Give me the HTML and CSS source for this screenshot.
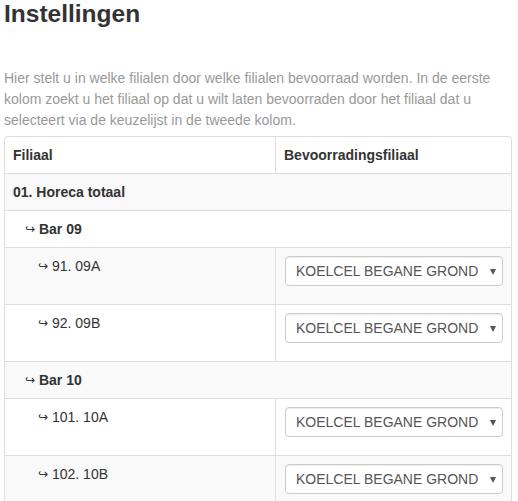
FILE: index.html
```html
<!DOCTYPE html>
<html lang="nl">
<head>
<meta charset="utf-8">
<title>Instellingen</title>
<link rel="stylesheet" href="styles.css">
</head>
<body>
<div class="page">
  <h1 class="title">Instellingen</h1>
  <p class="intro">Hier stelt u in welke filialen door welke filialen bevoorraad worden. In de eerste kolom zoekt u het filiaal op dat u wilt laten bevoorraden door het filiaal dat u selecteert via de keuzelijst in de tweede kolom.</p>
  <div class="panel">
    <table class="grid">
      <thead>
        <tr><th class="col-a">Filiaal</th><th>Bevoorradingsfiliaal</th></tr>
      </thead>
      <tbody>
        <tr class="odd"><td colspan="2" class="group">01. Horeca totaal</td></tr>
        <tr><td colspan="2" class="group lvl1"><span class="arr">↪</span> Bar 09</td></tr>
        <tr class="odd">
          <td class="lvl2"><span class="arr">↪</span> 91. 09A</td>
          <td><div class="pick"><select class="sel"><option>KOELCEL BEGANE GROND</option></select></div></td>
        </tr>
        <tr>
          <td class="lvl2"><span class="arr">↪</span> 92. 09B</td>
          <td><div class="pick"><select class="sel"><option>KOELCEL BEGANE GROND</option></select></div></td>
        </tr>
        <tr class="odd"><td colspan="2" class="group lvl1"><span class="arr">↪</span> Bar 10</td></tr>
        <tr>
          <td class="lvl2"><span class="arr">↪</span> 101. 10A</td>
          <td><div class="pick"><select class="sel"><option>KOELCEL BEGANE GROND</option></select></div></td>
        </tr>
        <tr class="odd">
          <td class="lvl2"><span class="arr">↪</span> 102. 10B</td>
          <td><div class="pick"><select class="sel"><option>KOELCEL BEGANE GROND</option></select></div></td>
        </tr>
      </tbody>
    </table>
  </div>
</div>
</body>
</html>
```

FILE: styles.css
```css
html, body {
  margin: 0;
  padding: 0;
  background: #fff;
}
body {
  font-family: "Liberation Sans", Arial, sans-serif;
  font-size: 14px;
  line-height: 20px;
  color: #333;
}
.page {
  padding: 1px 6px 0 4px;
}
.title {
  margin: 0;
  font-size: 24.5px;
  line-height: 26px;
  font-weight: bold;
  color: #333;
}
.intro {
  margin: 41px 0 5px 0;
  color: #999;
  line-height: 21px;
}
.panel {
  border: 1px solid #ddd;
  border-radius: 4px;
  overflow: hidden;
}
.grid {
  width: 100%;
  border-collapse: collapse;
}
.grid th, .grid td {
  padding: 8px;
  text-align: left;
  vertical-align: top;
  border-top: 1px solid #ddd;
  line-height: 20px;
}
.grid thead th {
  border-top: 0;
  font-weight: bold;
}
.grid th + th, .grid td + td {
  border-left: 1px solid #ddd;
}
.col-a {
  width: 254px;
}
.grid tr.odd td {
  background: #f9f9f9;
}
.group {
  font-weight: bold;
}
.lvl1 {
  padding-left: 20px !important;
}
.lvl2 {
  padding-left: 33px !important;
}
.arr {
  display: inline-block;
  font-family: "DejaVu Sans", sans-serif;
  font-size: 12px;
  line-height: 10px;
  font-weight: normal;
  vertical-align: 1px;
}
.pick {
  position: relative;
  margin-bottom: 10px;
  margin-left: 1px;
}
.sel {
  display: block;
  width: 100%;
  height: 30px;
  box-sizing: border-box;
  padding: 0 24px 0 10px;
  border: 1px solid #ccc;
  border-radius: 4px;
  background: #fff;
  color: #555;
  font-family: "Liberation Sans", Arial, sans-serif;
  font-size: 14px;
  -webkit-appearance: none;
  appearance: none;
  box-shadow: inset 0 1px 1px rgba(0,0,0,0.075);
}
.pick::after {
  content: "";
  position: absolute;
  right: 7px;
  top: 13px;
  border-left: 3.5px solid transparent;
  border-right: 3.5px solid transparent;
  border-top: 6px solid #555;
  pointer-events: none;
}
```
